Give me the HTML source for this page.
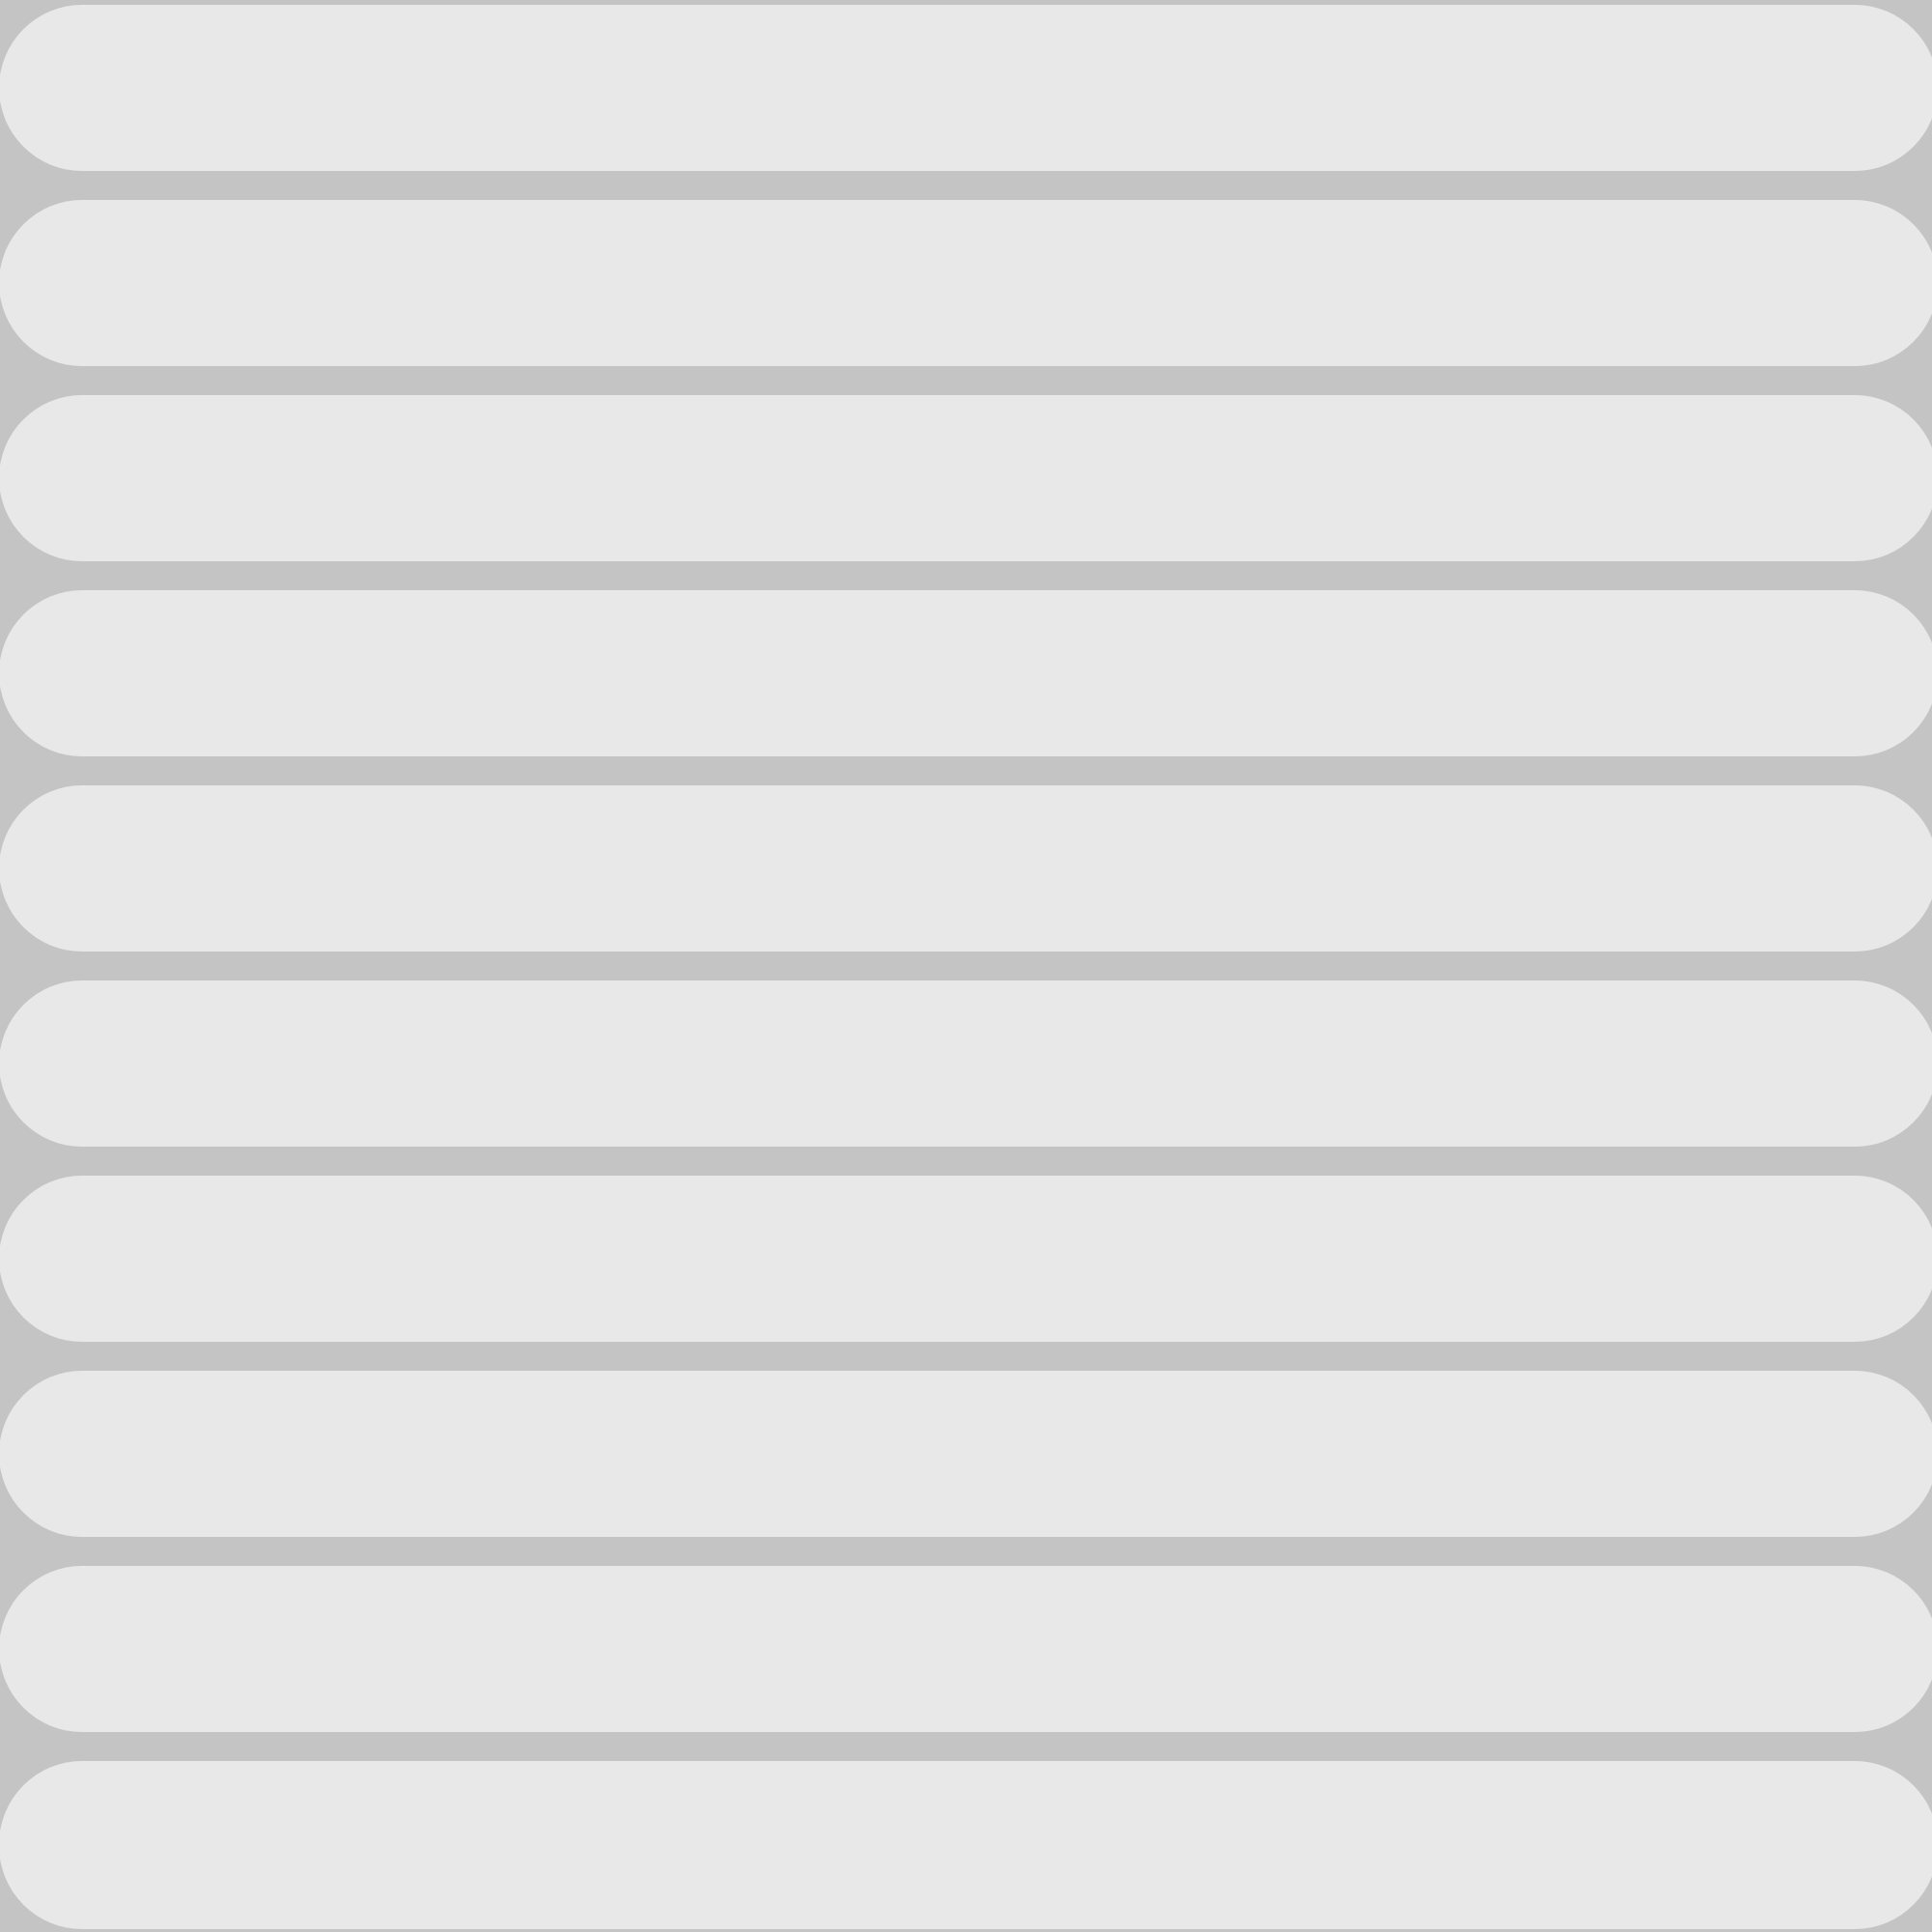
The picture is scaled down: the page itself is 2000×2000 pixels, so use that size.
<!DOCTYPE html>
<html><head><style>
html,body{margin:0;padding:0;width:2000px;height:2000px;overflow:hidden;background:#c4c4c4;}
.b{position:absolute;left:-1px;width:2007px;height:172px;border-radius:86px;background:#e8e8e8;}
</style></head><body>
<div class="b" style="top:5px"></div>
<div class="b" style="top:207px"></div>
<div class="b" style="top:409px"></div>
<div class="b" style="top:611px"></div>
<div class="b" style="top:813px"></div>
<div class="b" style="top:1015px"></div>
<div class="b" style="top:1217px"></div>
<div class="b" style="top:1419px"></div>
<div class="b" style="top:1621px"></div>
<div class="b" style="top:1823px;height:174px"></div>
</body></html>
